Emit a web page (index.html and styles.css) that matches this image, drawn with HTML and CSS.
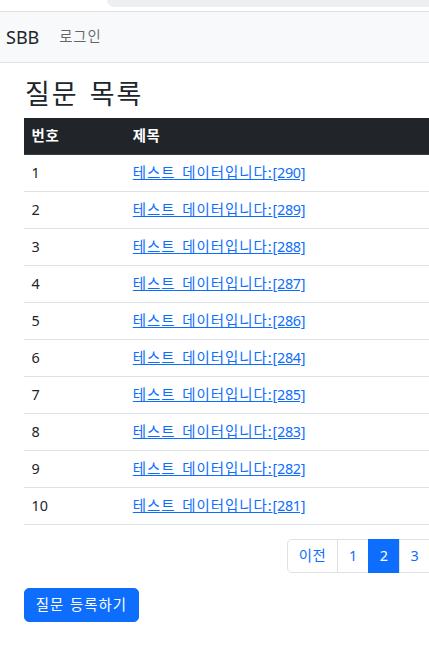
FILE: index.html
```html
<!DOCTYPE html>
<html lang="ko">
<head>
<meta charset="utf-8">
<title>SBB</title>
<link rel="stylesheet" href="styles.css">
</head>
<body>
<div class="chrome"><div class="chrome-tab"></div></div>
<nav class="navbar">
  <a class="brand" href="#">SBB</a>
  <a class="nav-link" href="#">로그인</a>
</nav>
<main class="container">
  <h2 class="title">질문 목록</h2>
  <table class="table">
    <thead>
      <tr><th class="col-num">번호</th><th>제목</th></tr>
    </thead>
    <tbody>
      <tr><td>1</td><td><a href="#"><span class="ko">테스트 데이터입니다:</span>[290]</a></td></tr>
      <tr><td>2</td><td><a href="#"><span class="ko">테스트 데이터입니다:</span>[289]</a></td></tr>
      <tr><td>3</td><td><a href="#"><span class="ko">테스트 데이터입니다:</span>[288]</a></td></tr>
      <tr><td>4</td><td><a href="#"><span class="ko">테스트 데이터입니다:</span>[287]</a></td></tr>
      <tr><td>5</td><td><a href="#"><span class="ko">테스트 데이터입니다:</span>[286]</a></td></tr>
      <tr><td>6</td><td><a href="#"><span class="ko">테스트 데이터입니다:</span>[284]</a></td></tr>
      <tr><td>7</td><td><a href="#"><span class="ko">테스트 데이터입니다:</span>[285]</a></td></tr>
      <tr><td>8</td><td><a href="#"><span class="ko">테스트 데이터입니다:</span>[283]</a></td></tr>
      <tr><td>9</td><td><a href="#"><span class="ko">테스트 데이터입니다:</span>[282]</a></td></tr>
      <tr><td>10</td><td><a href="#"><span class="ko">테스트 데이터입니다:</span>[281]</a></td></tr>
    </tbody>
  </table>
  <nav class="pager">
    <ul class="pagination">
      <li class="page-item"><a class="page-link" href="#">이전</a></li>
      <li class="page-item"><a class="page-link" href="#">1</a></li>
      <li class="page-item active"><a class="page-link" href="#">2</a></li>
      <li class="page-item"><a class="page-link" href="#">3</a></li>
      <li class="page-item"><a class="page-link" href="#">4</a></li>
    </ul>
  </nav>
  <a class="btn-primary" href="#">질문 등록하기</a>
</main>
</body>
</html>
```
FILE: styles.css
```css
html, body {
  margin: 0;
  padding: 0;
  overflow: hidden;
}
body {
  font-family: "Noto Sans", "Noto Sans CJK KR", sans-serif;
  font-size: 14.4px;
  line-height: 1.5;
  color: #212529;
  background: #fff;
  width: 429px;
}
.chrome {
  height: 11px;
  background: #fff;
  display: flex;
  justify-content: flex-end;
}
.chrome-tab {
  width: 322px;
  height: 7px;
  background: #eeeff2;
  border-bottom-left-radius: 12px;
}
.navbar {
  height: 52px;
  box-sizing: border-box;
  background: #f8f9fa;
  border-top: 1px solid #dee2e6;
  border-bottom: 1px solid #dee2e6;
  display: flex;
  align-items: center;
  padding-left: 6px;
}
.brand {
  font-size: 18px;
  color: #212529;
  text-decoration: none;
  margin-right: 13px;
  line-height: 27px;
}
.nav-link {
  color: rgba(0, 0, 0, 0.6);
  text-decoration: none;
  padding: 0 7px;
  font-size: 14.4px;
  letter-spacing: 0.8px;
}
.container {
  width: 620px;
  padding: 14px 0 0 24px;
}
.title {
  margin: 0 0 7px 0;
  font-size: 27px;
  font-weight: 400;
  line-height: 34px;
  padding-left: 1px;
  letter-spacing: 2px;
  word-spacing: 2px;
}
.table {
  width: 620px;
  border-collapse: collapse;
  margin-bottom: 14.4px;
}
.table th, .table td {
  padding: 7.2px 7.6px;
  text-align: left;
  line-height: 21.6px;
  border-bottom: 1px solid #dee2e6;
}
.table thead th {
  background: #212529;
  color: #fff;
  font-weight: 700;
  border-bottom-color: #373b3e;
  letter-spacing: 0.6px;
}
.col-num {
  width: 86px;
}
.table a {
  color: #0d6efd;
  text-decoration: underline;
  letter-spacing: -0.3px;
}
.ko {
  letter-spacing: 1px;
  word-spacing: 2px;
}
.pager {
  padding-left: 263px;
  margin-bottom: 14.4px;
}
.pagination {
  list-style: none;
  margin: 0;
  padding: 0;
  display: flex;
}
.page-link {
  display: block;
  padding: 5.4px 10.8px;
  line-height: 21.6px;
  color: #0d6efd;
  text-decoration: none;
  border: 1px solid #dee2e6;
  margin-left: -1px;
  background: #fff;
}
.page-item:first-child .page-link {
  margin-left: 0;
  border-radius: 5px 0 0 5px;
  letter-spacing: 0.5px;
}
.page-item.active .page-link {
  background: #0d6efd;
  border-color: #0d6efd;
  color: #fff;
}
.btn-primary {
  display: inline-block;
  padding: 5.4px 10.8px;
  line-height: 21.6px;
  color: #fff;
  background: #0d6efd;
  border: 1px solid #0d6efd;
  border-radius: 5px;
  text-decoration: none;
  letter-spacing: 1px;
  word-spacing: 1px;
}
```
